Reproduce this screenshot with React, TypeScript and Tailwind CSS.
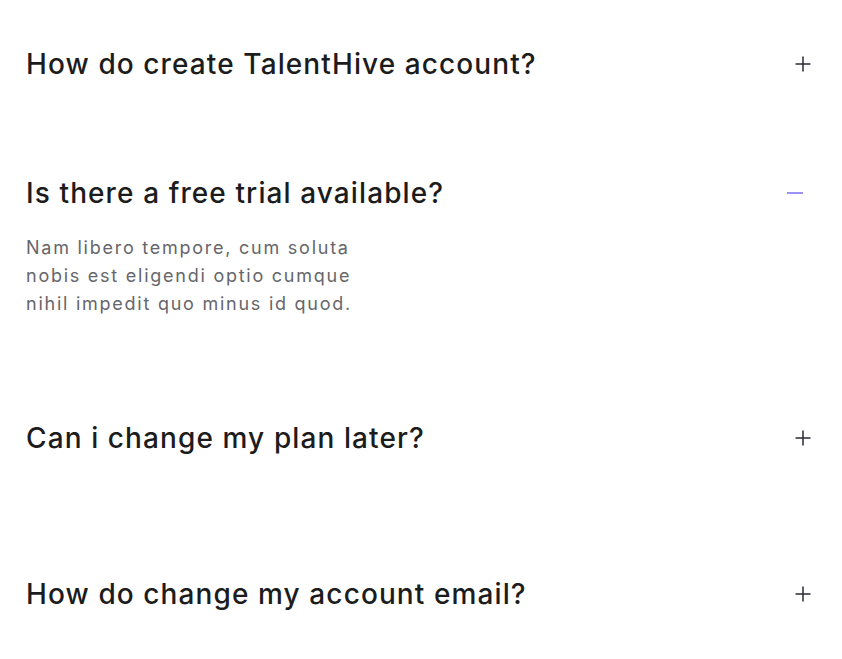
import React, { useState } from 'react';

interface FaqItem {
  question: string;
  answer: string;
}

const faqs: FaqItem[] = [
  {
    question: 'How do create TalentHive account?',
    answer: 'Nam libero tempore, cum soluta nobis est eligendi optio cumque nihil impedit quo minus id quod.',
  },
  {
    question: 'Is there a free trial available?',
    answer: 'Nam libero tempore, cum soluta nobis est eligendi optio cumque nihil impedit quo minus id quod.',
  },
  {
    question: 'Can i change my plan later?',
    answer: 'Nam libero tempore, cum soluta nobis est eligendi optio cumque nihil impedit quo minus id quod.',
  },
  {
    question: 'How do change my account email?',
    answer: 'Nam libero tempore, cum soluta nobis est eligendi optio cumque nihil impedit quo minus id quod.',
  },
];

const PlusIcon: React.FC = () => (
  <svg width="16" height="16" viewBox="0 0 16 16" fill="none" className="text-[#2a2a35]">
    <path d="M8 0.5v15M0.5 8h15" stroke="currentColor" strokeWidth="1.5" />
  </svg>
);

const MinusIcon: React.FC = () => (
  <svg width="16" height="16" viewBox="0 0 16 16" fill="none" className="text-[#7b6cf0]">
    <path d="M0 8h16" stroke="currentColor" strokeWidth="1.5" />
  </svg>
);

export default function App() {
  const [open, setOpen] = useState<number | null>(1);

  // spacing between rows in the reference is not uniform
  const gaps = ['pt-[46px]', 'pt-[93px]', 'pt-[102px]', 'pt-[120px]'];

  return (
    <div
      className="min-h-screen bg-white px-[26px]"
      style={{ fontFamily: 'Inter, "Noto Sans", sans-serif' }}
    >
      {faqs.map((faq, i) => {
        const isOpen = open === i;
        return (
          <div key={faq.question} className={gaps[i]}>
            <button
              type="button"
              onClick={() => setOpen(isOpen ? null : i)}
              className="flex w-full items-center justify-between text-left"
            >
              <span className="text-[28px] leading-[36px] font-medium tracking-[1.1px] text-[#1c1c1c]">
                {faq.question}
              </span>
              <span className={isOpen ? 'mr-[13px] flex' : 'mr-[5px] flex'}>
                {isOpen ? <MinusIcon /> : <PlusIcon />}
              </span>
            </button>
            {isOpen && (
              <p className="mt-[23px] max-w-[370px] text-[18px] leading-[28px] tracking-[1.75px] text-[#66666b]">
                {faq.answer}
              </p>
            )}
          </div>
        );
      })}
    </div>
  );
}
